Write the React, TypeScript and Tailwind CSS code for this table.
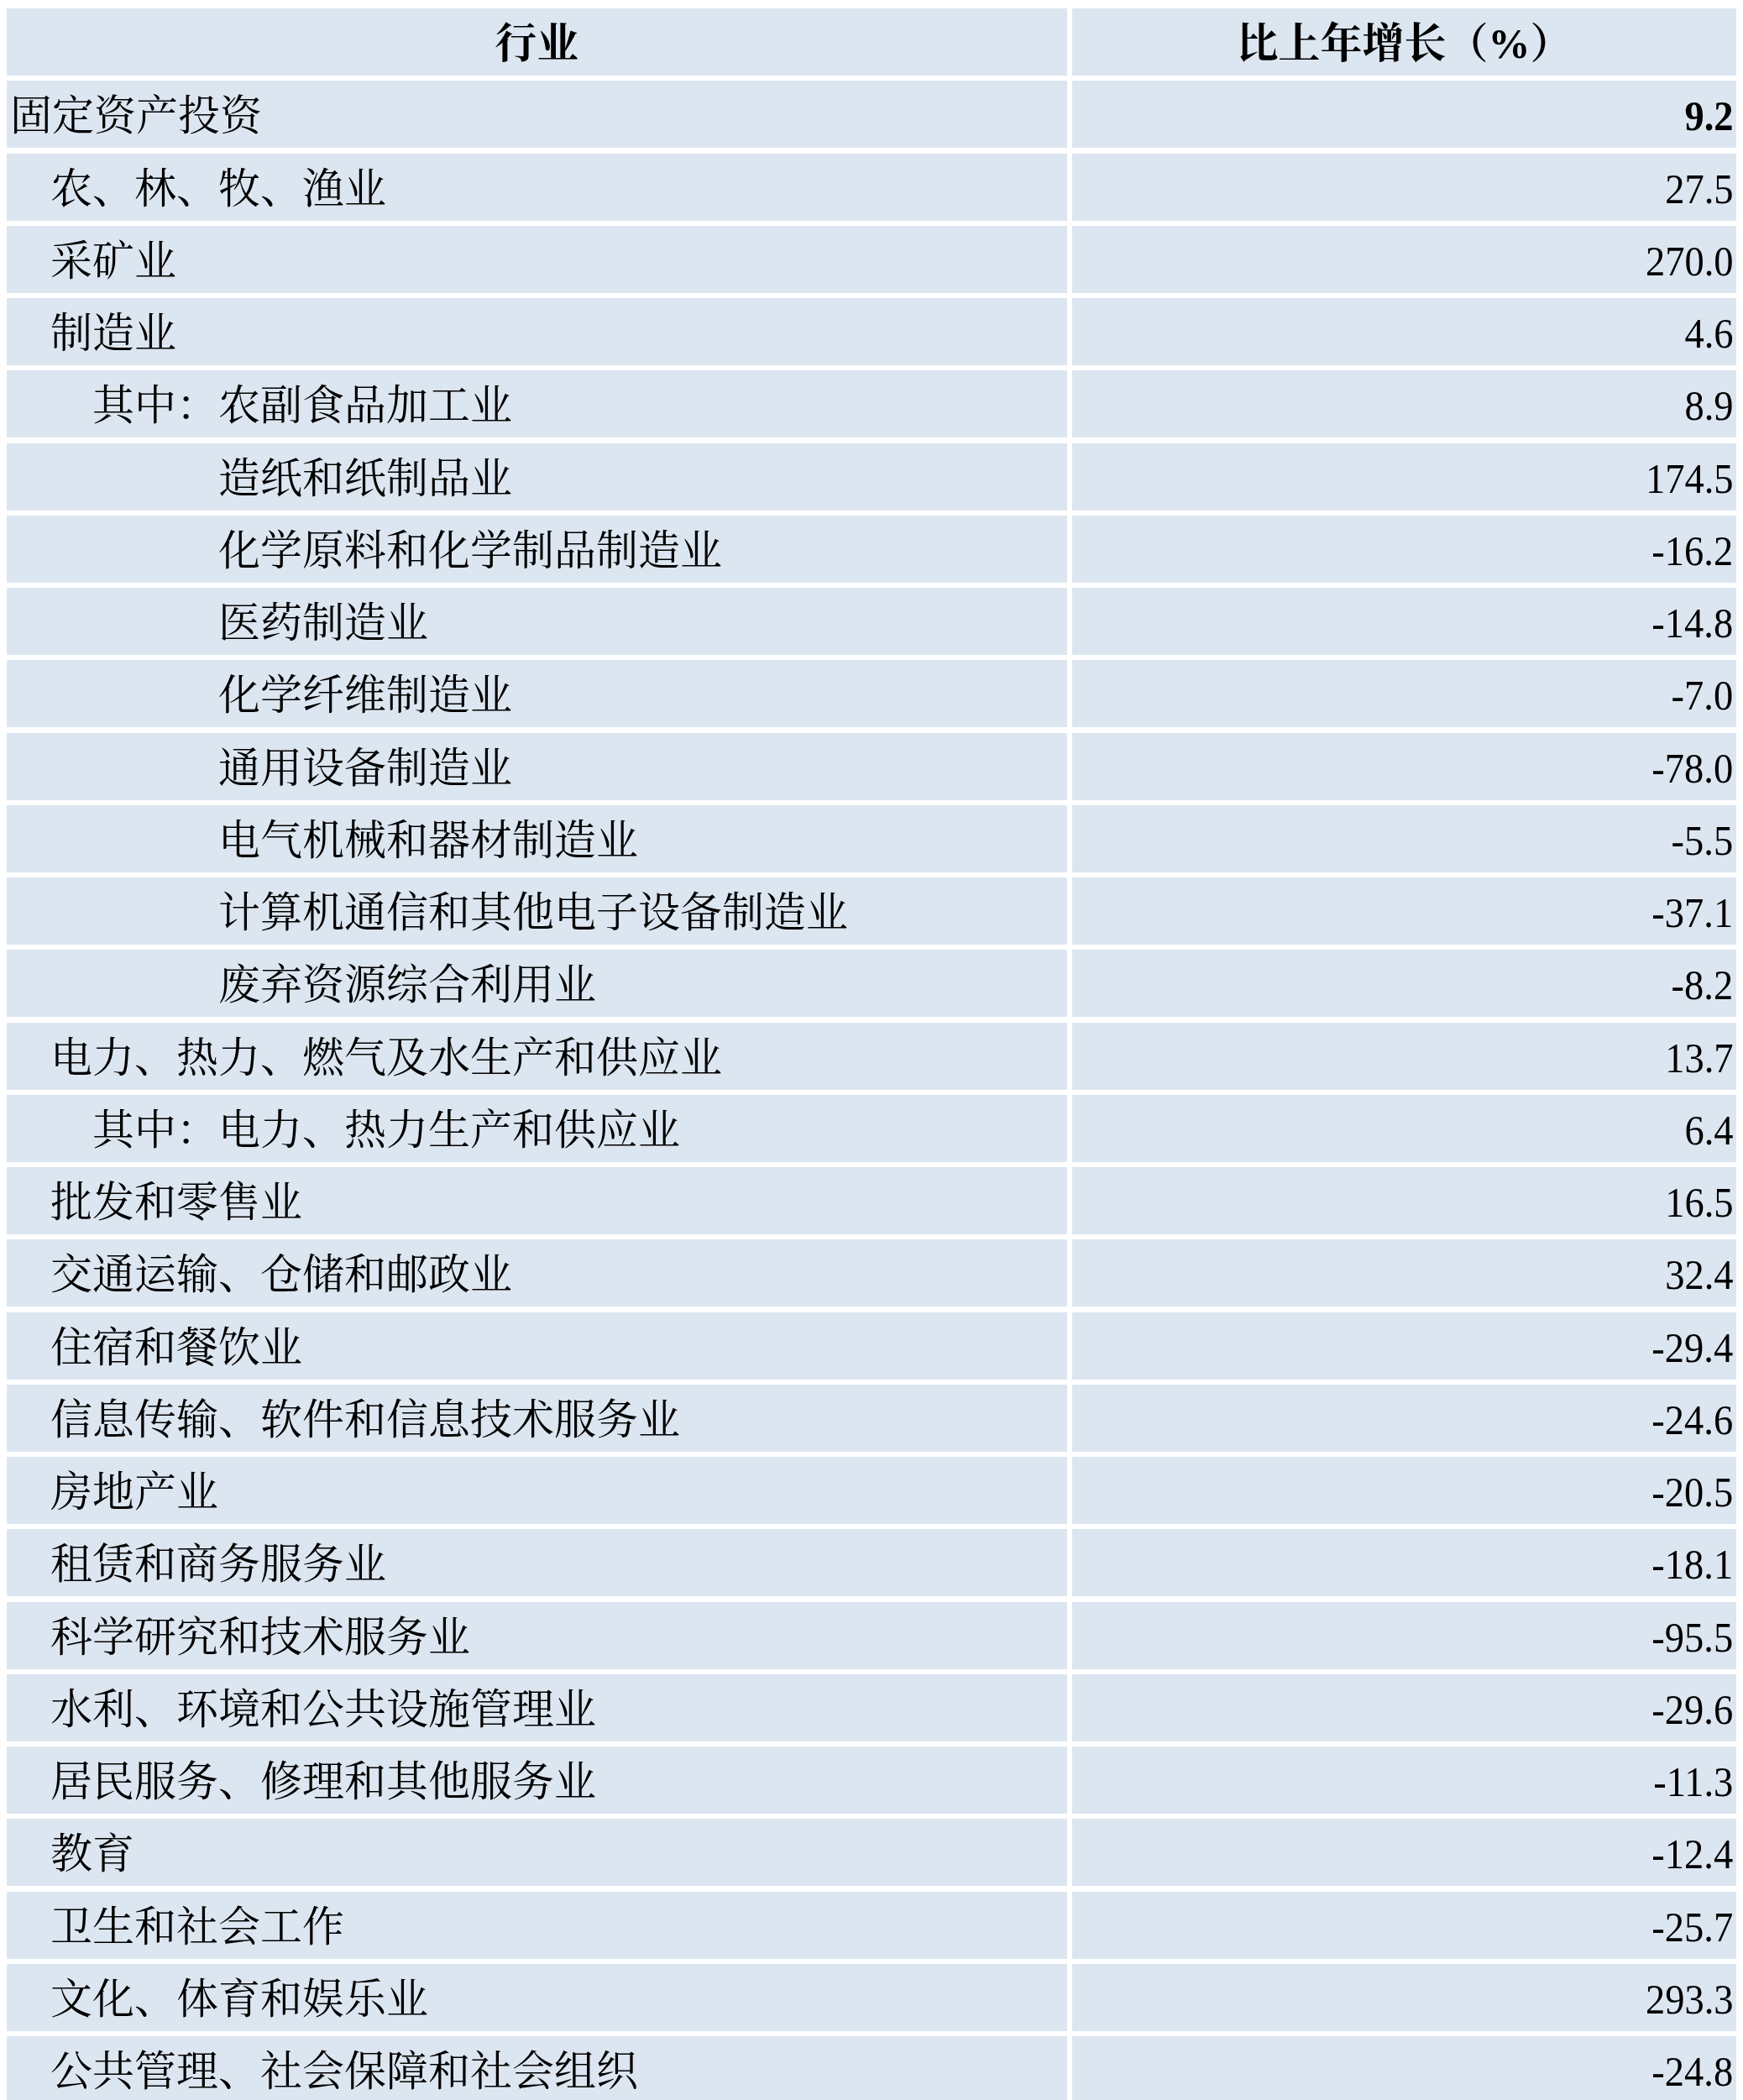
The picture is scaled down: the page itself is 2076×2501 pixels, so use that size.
import React from "react";

type Row = { name: string; value: string; level: 0 | 1 | 2 | 3; bold?: boolean };

const rows: Row[] = [
  { name: "固定资产投资", value: "9.2", level: 0, bold: true },
  { name: "农、林、牧、渔业", value: "27.5", level: 1 },
  { name: "采矿业", value: "270.0", level: 1 },
  { name: "制造业", value: "4.6", level: 1 },
  { name: "其中：农副食品加工业", value: "8.9", level: 2 },
  { name: "造纸和纸制品业", value: "174.5", level: 3 },
  { name: "化学原料和化学制品制造业", value: "-16.2", level: 3 },
  { name: "医药制造业", value: "-14.8", level: 3 },
  { name: "化学纤维制造业", value: "-7.0", level: 3 },
  { name: "通用设备制造业", value: "-78.0", level: 3 },
  { name: "电气机械和器材制造业", value: "-5.5", level: 3 },
  { name: "计算机通信和其他电子设备制造业", value: "-37.1", level: 3 },
  { name: "废弃资源综合利用业", value: "-8.2", level: 3 },
  { name: "电力、热力、燃气及水生产和供应业", value: "13.7", level: 1 },
  { name: "其中：电力、热力生产和供应业", value: "6.4", level: 2 },
  { name: "批发和零售业", value: "16.5", level: 1 },
  { name: "交通运输、仓储和邮政业", value: "32.4", level: 1 },
  { name: "住宿和餐饮业", value: "-29.4", level: 1 },
  { name: "信息传输、软件和信息技术服务业", value: "-24.6", level: 1 },
  { name: "房地产业", value: "-20.5", level: 1 },
  { name: "租赁和商务服务业", value: "-18.1", level: 1 },
  { name: "科学研究和技术服务业", value: "-95.5", level: 1 },
  { name: "水利、环境和公共设施管理业", value: "-29.6", level: 1 },
  { name: "居民服务、修理和其他服务业", value: "-11.3", level: 1 },
  { name: "教育", value: "-12.4", level: 1 },
  { name: "卫生和社会工作", value: "-25.7", level: 1 },
  { name: "文化、体育和娱乐业", value: "293.3", level: 1 },
  { name: "公共管理、社会保障和社会组织", value: "-24.8", level: 1 },
];

const indent: Record<number, string> = {
  0: "pl-[4px]",
  1: "pl-[52px]",
  2: "pl-[102px]",
  3: "pl-[252px]",
};

const font = {
  fontFamily: '"Liberation Serif", "Noto Serif CJK SC", "Noto Sans CJK SC", serif',
};

export default function App() {
  return (
    <div
      className="w-[2076px] bg-white pt-[10px] px-[8px] flex flex-col gap-y-[6.25px] text-black text-[50px] leading-none"
      style={font}
    >
      <div className="grid grid-cols-[1263px_791px] gap-x-[6px]">
        <div className="h-[80px] pt-[4px] bg-[#dce6f0] flex items-center justify-center font-bold">行业</div>
        <div className="h-[80px] pt-[4px] bg-[#dce6f0] flex items-center justify-center font-bold">比上年增长（%）</div>
      </div>
      {rows.map((r) => (
        <div key={r.name} className="grid grid-cols-[1263px_791px] gap-x-[6px]">
          <div className={`h-[80px] pt-[4px] bg-[#dce6f0] flex items-center whitespace-nowrap ${indent[r.level]}`}>
            {r.name}
          </div>
          <div
            className={`h-[80px] pt-[4px] bg-[#dce6f0] flex items-center justify-end pr-[4px] ${r.bold ? "font-bold" : ""}`}
          >
            <span className="inline-block origin-right scale-x-[0.93]">{r.value}</span>
          </div>
        </div>
      ))}
    </div>
  );
}
